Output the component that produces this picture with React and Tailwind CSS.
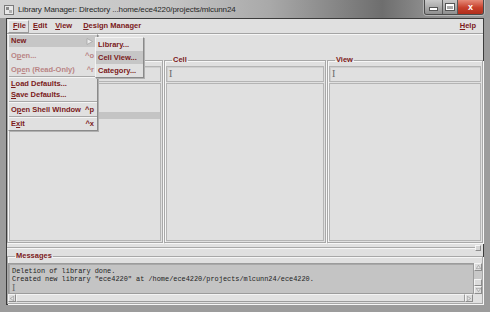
const menuRed = 'text-[#7b1a1a]';

function Caret({ className = '' }) {
  return (
    <span className={`font-['Liberation_Serif',serif] text-[10px] leading-none text-[#6a6a6a] ${className}`}>I</span>
  );
}

function Group({ label, children, className = '' }) {
  return (
    <fieldset className={`min-w-0 border border-[#a8a8a8] shadow-[inset_1px_1px_0_#f6f6f6,1px_1px_0_#f6f6f6] ${className}`}>
      <legend className={`ml-[7px] px-[1px] text-[7.5px] font-bold leading-[8px] ${menuRed}`}>{label}</legend>
      {children}
    </fieldset>
  );
}

function Column({ label, rows = 0, selected = -1 }) {
  return (
    <Group label={label} className="flex h-full flex-col">
      <div className="mx-[1px] mt-[2px] flex h-[16px] items-center border border-[#b4b4b4] bg-[#e0e0e0] pl-[2px] shadow-[inset_1px_1px_0_#cfcfcf]">
        <Caret />
      </div>
      <div className="mx-[1px] mb-[1px] mt-[1px] h-[158px] border border-[#b4b4b4] bg-[#e0e0e0]">
        {Array.from({ length: rows }, (_, i) => (
          <div key={i} className={`h-[7px] ${i === selected ? 'bg-[#c4c4c4]' : ''}`} />
        ))}
      </div>
    </Group>
  );
}

function Sep() {
  return <div className="h-[2px] border-t border-[#a8a8a8] bg-[#f4f4f4]" />;
}

function Item({ label, u, shortcut, disabled, active, h = 'h-[12px]', arrow }) {
  const color = disabled ? 'text-[#b98484]' : menuRed;
  const i = u ? label.indexOf(u) : -1;
  return (
    <div className={`flex ${h} items-center justify-between pl-[2px] pr-[3px] ${active ? 'bg-[#c6c6c6]' : ''}`}>
      <span className={`${color} whitespace-nowrap`}>
        {i >= 0 ? (
          <>
            {label.slice(0, i)}
            <u className="underline-offset-[1px]">{u}</u>
            {label.slice(i + 1)}
          </>
        ) : (
          label
        )}
      </span>
      {shortcut ? <span className={color}>{shortcut}</span> : null}
      {arrow ? (
        <svg width="7" height="7" viewBox="0 0 7 7" className="mr-[1px]">
          <path d="M1 0.5 L6.5 3.5 L1 6.5 Z" fill="#ececec" stroke="#a6a6a6" strokeWidth="0.8" />
        </svg>
      ) : null}
    </div>
  );
}

export default function App() {
  return (
    <div className="relative h-[312px] w-[490px] overflow-hidden bg-[#9c9c9c] font-['Liberation_Sans',Arial,sans-serif]">
      {/* title bar */}
      <div className="flex h-[18px] bg-[linear-gradient(90deg,#d2d2d2_0%,#c4c4c4_35%,#a9a9a9_55%,#6e6e6e_78%,#8a8a8a_86%,#9a9a9a_100%)]">
        <div className="flex items-center pl-[4px] pt-[1px]">
          <svg width="10" height="10" viewBox="0 0 10 10">
            <rect x="0.5" y="0.5" width="9" height="9" fill="#e8e8e8" stroke="#7a7a7a" />
            <rect x="2" y="2" width="3" height="3" fill="#8a8a8a" />
            <rect x="5" y="5" width="3" height="3" fill="#b0b0b0" />
          </svg>
          <span className="ml-[4px] whitespace-nowrap text-[8px] tracking-[-0.1px] text-[#262626]">
            Library Manager: Directory ...home/ece4220/projects/mlcunn24
          </span>
        </div>
        <div className="flex-1" />
        <div className="mr-[6px] flex h-[15px] overflow-hidden rounded-b-[3px] border border-t-0 border-[#4a4a4a] shadow-[0_0_0_1px_rgba(255,255,255,0.35)]">
          <div className="flex w-[18px] items-center justify-center border-r border-[#5a5a5a] bg-[linear-gradient(#c9c9c9,#8e8e8e)]">
            <div className="mt-[4px] h-[2px] w-[7px] bg-white shadow-[0_0_0_1px_#555]" />
          </div>
          <div className="flex w-[15px] items-center justify-center border-r border-[#5a5a5a] bg-[linear-gradient(#c9c9c9,#8e8e8e)]">
            <div className="h-[6px] w-[8px] border border-t-2 border-white shadow-[0_0_0_1px_#555]" />
          </div>
          <div className="flex w-[25px] items-center justify-center bg-[linear-gradient(#e58a78,#c7402b_55%,#b02e1c)] text-[9px] font-bold leading-none text-white">
            x
          </div>
        </div>
      </div>

      {/* client area */}
      <div className="mx-[6px] flex h-[287px] flex-col border border-[#3c3c3c] bg-[#e0e0e0]">
        {/* menu bar */}
        <div className={`flex h-[14px] items-center text-[7.5px] font-bold leading-none ${menuRed}`}>
          <div className="ml-[1px] flex h-[13px] w-[21px] items-center border border-[#f4f4f4] border-b-[#9a9a9a] border-r-[#9a9a9a] pl-[4px]">
            <u className="underline-offset-[1px]">F</u>ile
          </div>
          <span className="ml-[4px]"><u className="underline-offset-[1px]">E</u>dit</span>
          <span className="ml-[8px]"><u className="underline-offset-[1px]">V</u>iew</span>
          <span className="ml-[11px]"><u className="underline-offset-[1px]">D</u>esign Manager</span>
          <span className="ml-auto mr-[7px]"><u className="underline-offset-[1px]">H</u>elp</span>
        </div>
        <div className="h-[2px] border-t border-[#a4a4a4] bg-[#f6f6f6]" />

        {/* browser columns */}
        <div className="grid h-[208px] grid-cols-[156px_162px_1fr] gap-[1px] pt-[21px]">
          <Column label="Library" rows={5} selected={4} />
          <Column label="Cell" />
          <Column label="View" />
        </div>

        {/* sash */}
        <div className="flex h-[9px] items-center pr-[2px]">
          <div className="h-[2px] flex-1 border-t border-[#a8a8a8] bg-[#f6f6f6]" />
          <div className="h-[6px] w-[6px] border border-[#f6f6f6] border-b-[#8c8c8c] border-r-[#8c8c8c] bg-[#d6d6d6]" />
        </div>

        {/* messages */}
        <Group label="Messages" className="flex-1">
          <div className="mt-[3px] flex h-[31px]">
            <div className="flex-1 border border-[#9c9c9c] bg-[#c4c4c4] pl-[3px] pt-[3px] font-['Liberation_Mono',monospace] text-[6.9px] leading-[8px] text-[#1e1e1e] shadow-[inset_1px_1px_0_#a8a8a8]">
              <div>Deletion of library done.</div>
              <div>Created new library "ece4220" at /home/ece4220/projects/mlcunn24/ece4220.</div>
              <Caret className="block" />
            </div>
            <div className="flex w-[8px] flex-col bg-[#c8c8c8]">
              <div className="flex h-[8px] items-center justify-center border border-[#f4f4f4] border-b-[#8c8c8c] border-r-[#8c8c8c] bg-[#dcdcdc]">
                <svg width="5" height="4" viewBox="0 0 5 4"><path d="M2.5 0.3 L4.7 3.7 L0.3 3.7 Z" fill="#e8e8e8" stroke="#8c8c8c" strokeWidth="0.6" /></svg>
              </div>
              <div className="flex-1" />
              <div className="h-[7px] border border-[#f4f4f4] border-b-[#8c8c8c] border-r-[#8c8c8c] bg-[#dcdcdc]" />
              <div className="flex h-[8px] items-center justify-center border border-[#f4f4f4] border-b-[#8c8c8c] border-r-[#8c8c8c] bg-[#dcdcdc]">
                <svg width="5" height="4" viewBox="0 0 5 4"><path d="M2.5 3.7 L4.7 0.3 L0.3 0.3 Z" fill="#e8e8e8" stroke="#8c8c8c" strokeWidth="0.6" /></svg>
              </div>
            </div>
          </div>
          <div className="flex h-[8px] pr-[9px]">
            <div className="flex w-[8px] items-center justify-center border border-[#f4f4f4] border-b-[#8c8c8c] border-r-[#8c8c8c] bg-[#dcdcdc]">
              <svg width="4" height="5" viewBox="0 0 4 5"><path d="M0.3 2.5 L3.7 0.3 L3.7 4.7 Z" fill="#e8e8e8" stroke="#8c8c8c" strokeWidth="0.6" /></svg>
            </div>
            <div className="flex-1 border border-[#f4f4f4] border-b-[#9c9c9c] border-r-[#9c9c9c] bg-[#e2e2e2]" />
            <div className="flex w-[8px] items-center justify-center border border-[#f4f4f4] border-b-[#8c8c8c] border-r-[#8c8c8c] bg-[#dcdcdc]">
              <svg width="4" height="5" viewBox="0 0 4 5"><path d="M3.7 2.5 L0.3 0.3 L0.3 4.7 Z" fill="#e8e8e8" stroke="#8c8c8c" strokeWidth="0.6" /></svg>
            </div>
          </div>
        </Group>
      </div>

      {/* File menu */}
      <div className="absolute left-[8px] top-[34px] w-[90px] border border-[#f2f2f2] border-b-[#8a8a8a] border-r-[#8a8a8a] bg-[#e0e0e0] text-[7.5px] font-bold leading-none shadow-[1px_1px_0_#b0b0b0]">
        <Item label="New" active arrow />
        <div className="h-[2px]" />
        <Item label="Open..." u="p" shortcut="^o" disabled h="h-[14px]" />
        <Item label="Open (Read-Only)" u="e" shortcut="^r" disabled h="h-[13px]" />
        <Sep />
        <Item label="Load Defaults..." u="L" h="h-[11px]" />
        <Item label="Save Defaults..." u="S" />
        <Sep />
        <Item label="Open Shell Window" u="p" shortcut="^p" h="h-[13px]" />
        <Sep />
        <Item label="Exit" u="x" shortcut="^x" />
      </div>

      {/* New submenu */}
      <div className="absolute left-[95px] top-[37px] w-[49px] border border-[#f2f2f2] border-b-[#8a8a8a] border-r-[#8a8a8a] bg-[#e0e0e0] text-[7.5px] font-bold leading-none shadow-[1px_1px_0_#b0b0b0]">
        <Item label="Library..." h="h-[13px]" />
        <Item label="Cell View..." h="h-[13px]" active />
        <Item label="Category..." h="h-[13px]" />
      </div>
    </div>
  );
}
